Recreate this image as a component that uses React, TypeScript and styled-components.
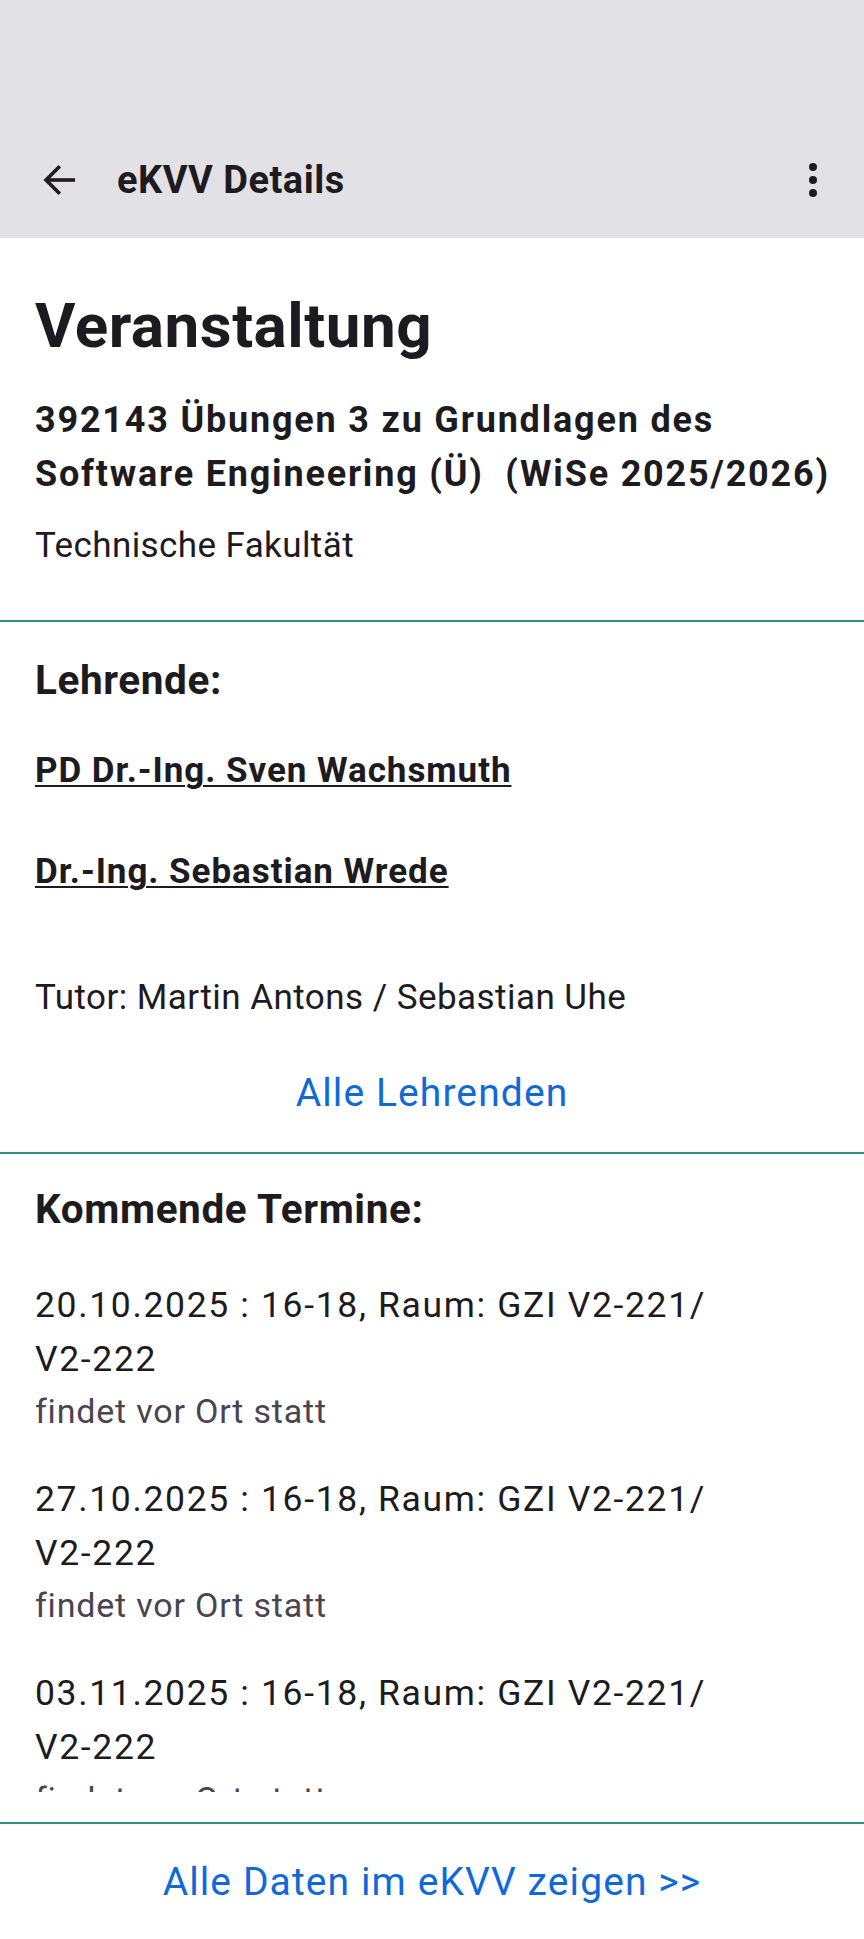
import React from "react";
import styled, { createGlobalStyle } from "styled-components";

const GlobalStyle = createGlobalStyle`
  html, body {
    margin: 0;
    padding: 0;
    background: #ffffff;
  }
  body {
    font-family: Roboto, "Noto Sans", Arial, sans-serif;
    color: #1d1b20;
    -webkit-font-smoothing: antialiased;
  }
  * { box-sizing: border-box; }
`;

const Page = styled.div`
  width: 864px;
  min-height: 1939px;
  display: flex;
  flex-direction: column;
  background: #ffffff;
`;

const Header = styled.header`
  height: 238px;
  background: #e2e1e6;
  display: flex;
  flex-direction: column;
  justify-content: flex-end;
`;

const Toolbar = styled.div`
  height: 116px;
  display: flex;
  align-items: center;
  padding: 0 27px 0 35px;
`;

const IconButton = styled.button`
  width: 48px;
  height: 48px;
  padding: 0;
  border: 0;
  background: transparent;
  display: flex;
  align-items: center;
  justify-content: center;
  color: #1d1b20;
`;

const ToolbarTitle = styled.h1`
  flex: 1;
  margin: 0 0 0 34px;
  font-size: 38px;
  font-weight: 700;
  line-height: normal;
  letter-spacing: 0.5px;
  color: #1d1b20;
`;

const Section = styled.section<{ $top: number; $bottom: number }>`
  display: flex;
  flex-direction: column;
  padding: ${(p) => p.$top}px 35px ${(p) => p.$bottom}px;
`;

const Divider = styled.hr`
  margin: 0;
  border: 0;
  height: 2px;
  background: #26967a;
`;

const PageTitle = styled.h2`
  margin: 0;
  font-size: 62px;
  line-height: 72px;
  font-weight: 700;
  letter-spacing: 0.5px;
`;

const CourseTitle = styled.h3`
  margin: 31px 0 0;
  font-size: 36px;
  line-height: 54px;
  font-weight: 700;
  letter-spacing: 1.8px;
  white-space: pre;
`;

const BodyText = styled.p<{ $top: number; $spacing: number }>`
  margin: ${(p) => p.$top}px 0 0;
  font-size: 35px;
  line-height: 50px;
  font-weight: 400;
  letter-spacing: ${(p) => p.$spacing}px;
`;

const SectionHeading = styled.h3`
  margin: 0;
  font-size: 40.5px;
  line-height: 48px;
  font-weight: 700;
  letter-spacing: 0.6px;
`;

const PeopleList = styled.div`
  display: flex;
  flex-direction: column;
  gap: 51px;
  margin-top: 42px;
`;

const PersonLink = styled.a`
  align-self: flex-start;
  font-size: 35px;
  line-height: 50px;
  font-weight: 700;
  letter-spacing: 0.95px;
  color: #1d1b20;
  text-decoration: underline;
  text-decoration-thickness: 2px;
  text-underline-offset: 3px;
`;

const CenterLink = styled.a<{ $top: number }>`
  margin-top: ${(p) => p.$top}px;
  align-self: center;
  font-size: 39px;
  line-height: 52px;
  font-weight: 400;
  letter-spacing: 1.1px;
  color: #0f6ad8;
  text-decoration: none;
`;

const DatesViewport = styled.div`
  margin-top: 45px;
  height: 514px;
  overflow: hidden;
  display: flex;
  flex-direction: column;
  gap: 36px;
`;

const DateItem = styled.div`
  display: flex;
  flex-direction: column;
  flex-shrink: 0;
`;

const DateLine = styled.div`
  font-size: 35.5px;
  line-height: 54px;
  letter-spacing: 1.65px;
`;

const DateNote = styled.div`
  font-size: 34px;
  line-height: 50px;
  letter-spacing: 0.8px;
  color: #49454f;
`;

const Footer = styled.footer`
  display: flex;
  justify-content: center;
  padding: 32px 0 31px;
`;

const ArrowBack = () => (
  <svg
    width="48"
    height="48"
    viewBox="0 0 24 24"
    fill="none"
    stroke="currentColor"
    strokeWidth="1.8"
    strokeLinejoin="miter"
    aria-hidden="true"
  >
    <path d="M20 12H5.6" />
    <path d="M12.4 5.1L5.5 12l6.9 6.9" />
  </svg>
);

const MoreVert = () => (
  <svg width="48" height="48" viewBox="0 0 48 48" fill="currentColor" aria-hidden="true">
    <circle cx="24" cy="11" r="4" />
    <circle cx="24" cy="24" r="4" />
    <circle cx="24" cy="37" r="4" />
  </svg>
);

const dates = [
  { date: "20.10.2025", time: "16-18", room: "GZI V2-221/", room2: "V2-222" },
  { date: "27.10.2025", time: "16-18", room: "GZI V2-221/", room2: "V2-222" },
  { date: "03.11.2025", time: "16-18", room: "GZI V2-221/", room2: "V2-222" },
];

export default function App() {
  return (
    <>
      <GlobalStyle />
      <Page>
        <Header>
          <Toolbar>
            <IconButton aria-label="Zurück">
              <ArrowBack />
            </IconButton>
            <ToolbarTitle>eKVV Details</ToolbarTitle>
            <IconButton aria-label="Mehr">
              <MoreVert />
            </IconButton>
          </Toolbar>
        </Header>

        <Section $top={52} $bottom={49}>
          <PageTitle>Veranstaltung</PageTitle>
          <CourseTitle>
            {"392143 Übungen 3 zu Grundlagen des\nSoftware Engineering (Ü)  (WiSe 2025/2026)"}
          </CourseTitle>
          <BodyText $top={20} $spacing={0.4}>
            Technische Fakultät
          </BodyText>
        </Section>

        <Divider />

        <Section $top={34} $bottom={33}>
          <SectionHeading>Lehrende:</SectionHeading>
          <PeopleList>
            <PersonLink href="#">PD Dr.-Ing. Sven Wachsmuth</PersonLink>
            <PersonLink href="#">Dr.-Ing. Sebastian Wrede</PersonLink>
          </PeopleList>
          <BodyText $top={76} $spacing={0.45}>
            Tutor: Martin Antons / Sebastian Uhe
          </BodyText>
          <CenterLink href="#" $top={44}>
            Alle Lehrenden
          </CenterLink>
        </Section>

        <Divider />

        <Section $top={31} $bottom={30}>
          <SectionHeading>Kommende Termine:</SectionHeading>
          <DatesViewport>
            {dates.map((d) => (
              <DateItem key={d.date}>
                <DateLine>
                  {d.date} : {d.time}, Raum: {d.room}
                  <br />
                  {d.room2}
                </DateLine>
                <DateNote>findet vor Ort statt</DateNote>
              </DateItem>
            ))}
          </DatesViewport>
        </Section>

        <Divider />

        <Footer>
          <CenterLink href="#" $top={0}>
            Alle Daten im eKVV zeigen &gt;&gt;
          </CenterLink>
        </Footer>
      </Page>
    </>
  );
}
